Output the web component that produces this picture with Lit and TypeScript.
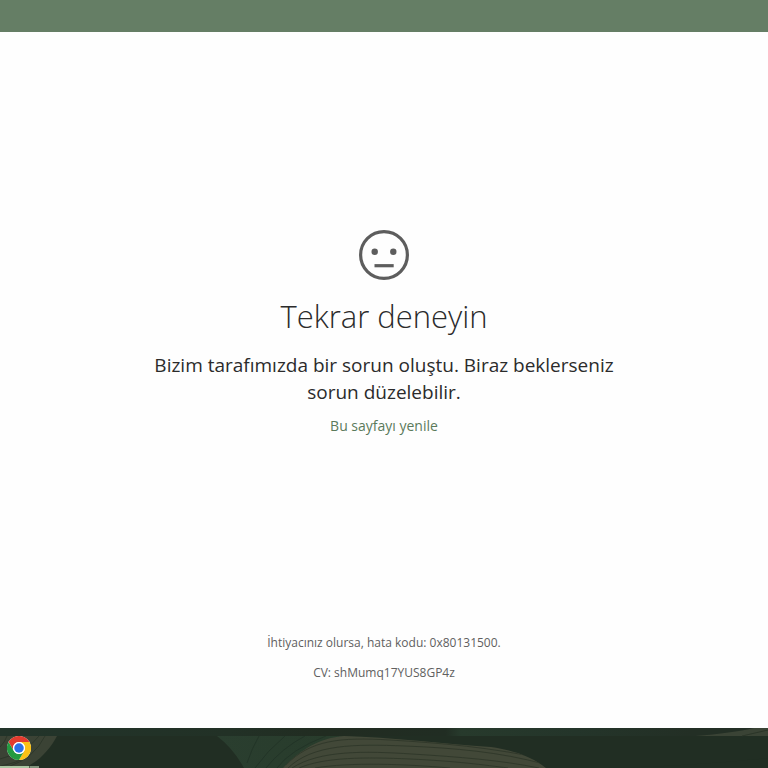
import { LitElement, html, css } from "lit";
import { customElement } from "lit/decorators.js";

@customElement("task-bar")
class TaskBar extends LitElement {
  static styles = css`
    :host {
      display: block;
      position: relative;
      height: 40px;
      background: #212e23;
      overflow: hidden;
    }
    .wallpaper {
      position: absolute;
      inset: 0;
      width: 100%;
      height: 100%;
    }
    .app {
      position: relative;
      display: flex;
      align-items: flex-end;
      width: 39px;
      height: 40px;
      padding: 0 0 8px 7px;
      box-sizing: border-box;
      border: 0;
      background: none;
    }
    .logo {
      width: 24px;
      height: 24px;
    }
    .running {
      position: absolute;
      left: 0;
      bottom: 0;
      width: 39px;
      height: 2px;
      background: linear-gradient(90deg, #a9c6a2 0 29px, #53654f 29px 30px, #80947c 30px);
    }
  `;

  render() {
    return html`
      <svg class="wallpaper" viewBox="0 0 768 40" preserveAspectRatio="none" aria-hidden="true">
        <defs>
          <linearGradient id="strip">
            <stop offset="0" stop-color="#22342a" />
            <stop offset="0.3" stop-color="#223126" />
            <stop offset="0.42" stop-color="#212c21" />
            <stop offset="0.58" stop-color="#212d23" />
            <stop offset="0.6" stop-color="#273a2c" />
            <stop offset="0.75" stop-color="#24352a" />
            <stop offset="0.9" stop-color="#232f25" />
          </linearGradient>
          <linearGradient id="leaf">
            <stop offset="0" stop-color="#2a3e2f" />
            <stop offset="1" stop-color="#273b2a" />
          </linearGradient>
          <clipPath id="hill">
            <path d="M283 40C297 25 317 10 344 8C390 9 446 16 491 19C518 23 535 31 546 40Z" />
          </clipPath>
        </defs>
        <path d="M0 8H57C50 21 40 33 24 40H0Z" fill="#3b4335" />
        <g fill="none" stroke="#2d372a">
          <path d="M0 19Q5 14 7 8M0 31Q27 24 39 8M10 38Q34 30 45 8M0 38Q18 35 27 28" />
        </g>
        <path d="M217 8H390L283 40H244Q233 20 217 8Z" fill="url(#leaf)" />
        <g fill="none" stroke="#223427">
          <path d="M247 35Q252 20 259 8M255 40Q267 23 285 8M266 40Q282 20 305 8M277 40Q290 22 326 8" />
        </g>
        <path d="M340 8H768V30Q650 42 546 40Q510 17 340 8Z" fill="#212e23" />
        <path d="M283 40C297 25 317 10 344 8C390 9 446 16 491 19C518 23 535 31 546 40Z" fill="#424838" />
        <g clip-path="url(#hill)" fill="none" stroke="#31392b">
          <path d="M286 37C310 12 340 9 390 12S490 19 550 32" />
          <path d="M288 40C313 16 355 16 405 18S500 24 544 36" />
          <path d="M292 40C320 22 365 23 412 26S500 32 539 40" />
          <path d="M299 40C325 29 365 29 410 31S485 37 508 40" />
          <path d="M315 40C350 34 405 36 450 40" />
        </g>
        <path d="M0 0H768V8H0Z" fill="url(#strip)" />
        <path d="M695 8Q732 5 754 0H768V8Z" fill="#3a4335" />
        <path d="M742 8Q755 5 768 2" fill="none" stroke="#2b3528" />
      </svg>
      <button class="app" type="button" aria-label="Google Chrome">
        <svg class="logo" viewBox="0 0 48 48" aria-hidden="true">
          <circle cx="24" cy="24" r="24" fill="#fff" />
          <path d="M3.2 12A24 24 0 0 1 44.8 12H24A12 12 0 0 0 13.6 30Z" fill="#e33b2e" />
          <path d="M44.8 12A24 24 0 0 1 24 48L34.4 30A12 12 0 0 0 24 12Z" fill="#fbc116" />
          <path d="M24 48A24 24 0 0 1 3.2 12L13.6 30A12 12 0 0 0 34.4 30Z" fill="#249a41" />
          <circle cx="24" cy="24" r="12" fill="#fff" />
          <circle cx="24" cy="24" r="9.5" fill="#2c70e8" />
        </svg>
        <span class="running"></span>
      </button>
    `;
  }
}

@customElement("app-root")
class AppRoot extends LitElement {
  static styles = css`
    :host {
      display: flex;
      flex-direction: column;
      min-height: 100vh;
      background: #fefefe;
      color: #2b2b2b;
      font-family: "Open Sans", "Noto Sans", sans-serif;
      text-align: center;
    }
    .titlebar {
      height: 32px;
      background: #657e65;
    }
    .page {
      flex: 1;
      display: flex;
      flex-direction: column;
      align-items: center;
      padding: 0 24px 45px;
    }
    .message {
      flex: 1;
      display: flex;
      flex-direction: column;
      align-items: center;
      justify-content: center;
      max-width: 480px;
    }
    .face {
      width: 50px;
      height: 50px;
    }
    h1 {
      margin: 12px 0;
      font-size: 31px;
      line-height: 48px;
      font-weight: 300;
    }
    p {
      margin: 0;
    }
    .lead {
      font-size: 19px;
      line-height: 27px;
    }
    a {
      margin-top: 10px;
      font-size: 14px;
      line-height: 20px;
      color: #5b7a5b;
      text-decoration: none;
    }
    .details {
      display: flex;
      flex-direction: column;
      gap: 10px;
      font-size: 12px;
      line-height: 20px;
      color: #606060;
    }
  `;

  render() {
    return html`
      <header class="titlebar"></header>
      <main class="page">
        <section class="message">
          <svg class="face" viewBox="0 0 50 50" aria-hidden="true">
            <circle cx="25" cy="25" r="23.4" fill="none" stroke="#5d5d5d" stroke-width="3.2" />
            <circle cx="15.7" cy="21.8" r="3.2" fill="#5d5d5d" />
            <circle cx="34.3" cy="21.8" r="3.2" fill="#5d5d5d" />
            <path d="M15.5 35.7H34.7" stroke="#5d5d5d" stroke-width="3.2" />
          </svg>
          <h1>Tekrar deneyin</h1>
          <p class="lead">Bizim tarafımızda bir sorun oluştu. Biraz beklerseniz sorun düzelebilir.</p>
          <a href="#">Bu sayfayı yenile</a>
        </section>
        <footer class="details">
          <p>İhtiyacınız olursa, hata kodu: 0x80131500.</p>
          <p>CV: shMumq17YUS8GP4z</p>
        </footer>
      </main>
      <task-bar></task-bar>
    `;
  }
}
